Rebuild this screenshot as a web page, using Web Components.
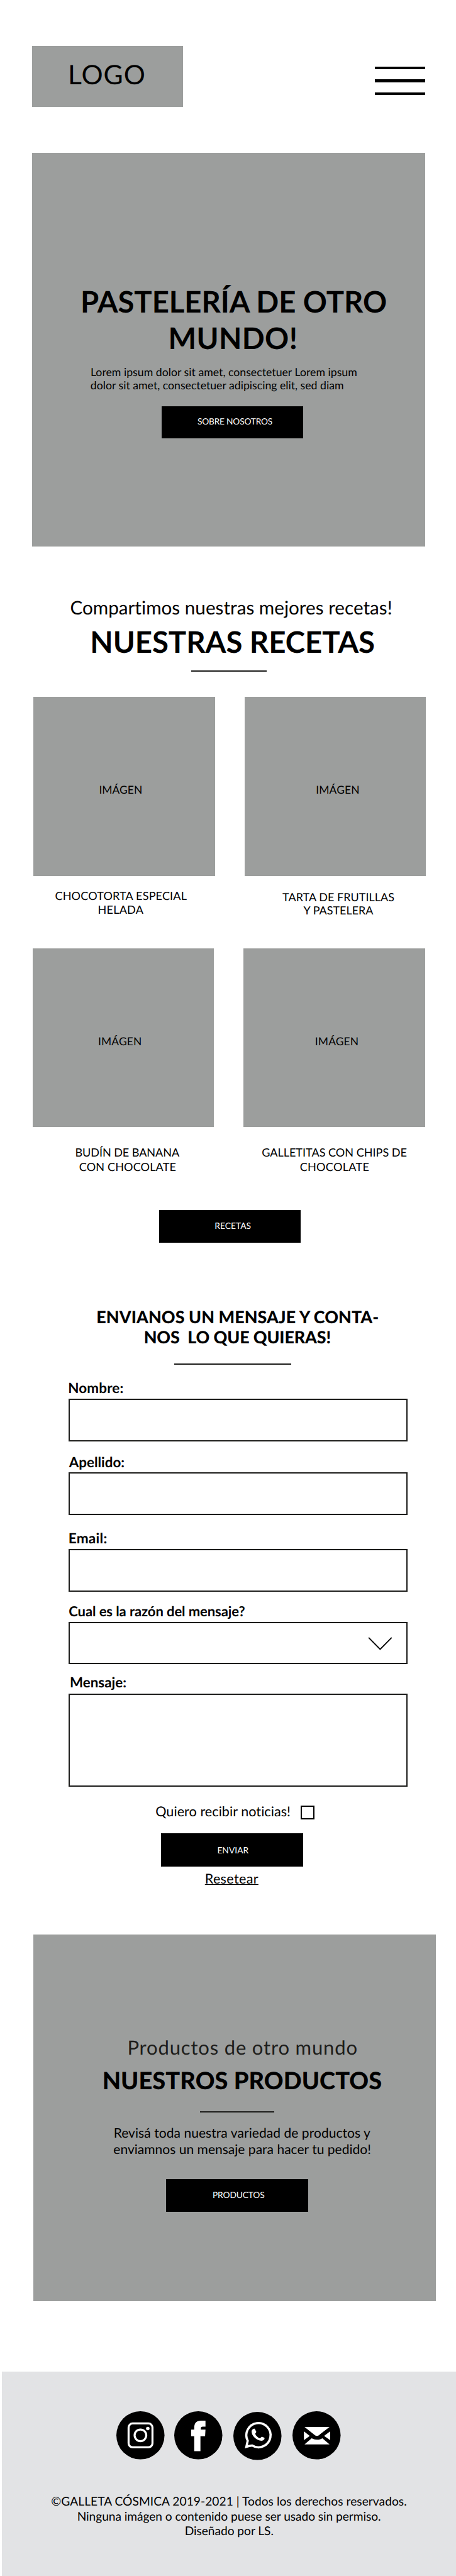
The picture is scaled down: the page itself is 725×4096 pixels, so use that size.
<!DOCTYPE html>
<html lang="es">
<head>
<meta charset="utf-8">
<title>Galleta Cósmica</title>
<style>
  html { background: #fff; }
  body { margin: 0; height: 4096px; overflow: hidden; font-family: Lato, sans-serif; color: #000;
         text-rendering: geometricPrecision; }
</style>
</head>
<body>
<galleta-page></galleta-page>

<script>
const ZOOM = .9268;
const define = (name, html, setup) => customElements.define(name, class extends HTMLElement {
  constructor() {
    super();
    this.attachShadow({ mode: 'open' }).innerHTML = html;
  }
  connectedCallback() { if (setup) setup(this); }
});

/* One line of text: its box ends on the baseline, and tracking fits it to the ink extent a..b.
   g is the distance from the previous block's bottom edge to the baseline. */
const ctx = document.createElement('canvas').getContext('2d');
define('text-line', `<style>
    :host { display: block; width: max-content; flex: none; }
    span { display: block; width: max-content; white-space: pre; }
  </style><span><slot></slot></span>`, el => {
  const n = k => parseFloat(el.getAttribute(k));
  const size = n('s'), weight = el.getAttribute('w') || 400, text = el.textContent;
  ctx.font = `${weight} 200px Lato`;
  const m = ctx.measureText(text), k = size / 200;
  const left = -m.actualBoundingBoxLeft * k;
  const right = (m.width - m.actualBoundingBoxRight) * k;
  const ascent = Math.round(m.fontBoundingBoxAscent * k * ZOOM) / ZOOM;
  const descent = Math.round(m.fontBoundingBoxDescent * k * ZOOM) / ZOOM;
  const st = el.style;
  st.fontSize = size + 'px';
  st.fontWeight = weight;
  st.height = size + 'px';
  st.lineHeight = 2 * size - (ascent - descent) + 'px';
  st.marginLeft = n('a') - left + 'px';
  st.marginTop = n('g') - size + 'px';
  /* Track from the advance width that the laid-out line really has. */
  const span = el.shadowRoot.querySelector('span');
  const wanted = n('b') - n('a') + left + right;
  st.letterSpacing = '0.001px';
  const scale = span.getBoundingClientRect().height / parseFloat(st.lineHeight) > .96 ? 1 : ZOOM;
  const natural = span.getBoundingClientRect().width / scale;
  if (natural > 0) st.letterSpacing = ((wanted - natural) / (text.length - 1)).toFixed(4) + 'px';
});

define('solid-button', `
  <style>
    :host { display: flow-root; box-sizing: border-box; width: var(--w, 244px); height: var(--h, 56px);
            background: #000; color: #fff; }
  </style><slot></slot>`);

define('thin-rule', `
  <style>:host { display: block; height: 2.16px; background: #1d1d1b; }</style>`);

define('menu-bars', `
  <style>
    :host { display: flex; flex-direction: column; gap: 17.2px; width: 86.6px; margin-top: 35.3px; }
    i { height: 4.8px; background: #000; }
  </style><i></i><i></i><i></i>`);

define('site-header', `
  <style>
    :host { display: flex; justify-content: space-between; align-items: flex-start;
            margin: 0 53px 0 55px; padding-top: 79px; height: 104px; }
    .logo { display: flow-root; width: 259px; height: 104px; background: #9c9e9d; }
  </style>
  <div class="logo"><text-line s="46" a="65.7" b="191.9" g="67.7">LOGO</text-line></div>
  <menu-bars></menu-bars>`);

define('hero-banner', `
  <style>
    :host { display: flow-root; margin: 79.6px 0 0 55px; width: 674px; height: 675.4px; background: #9c9e9d; }
    solid-button { margin: 28px 0 0 222.3px; --w: 242.9px; --h: 55.7px; }
  </style>
  <text-line s="51" w="700" a="87.1" b="606.8" g="275.4">PASTELERÍA DE OTRO</text-line>
  <text-line s="51" w="700" a="237.8" b="452.2" g="62">MUNDO!</text-line>
  <text-line s="19.1" a="102" b="556.5" g="46">Lorem ipsum dolor sit amet, consectetuer Lorem ipsum</text-line>
  <text-line s="19.1" a="101" b="533.5" g="23">dolor sit amet, consectetuer adipiscing elit, sed diam</text-line>
  <solid-button><text-line s="14.8" a="61.9" b="189.5" g="32">SOBRE NOSOTROS</text-line></solid-button>`);

define('recipe-card', `
  <style>
    :host { display: flow-root; }
    .image { display: flow-root; height: 306.6px; background: #9c9e9d; }
  </style>
  <div class="image"><slot name="image"></slot></div>
  <slot></slot>`);

define('recipe-section', `
  <style>
    :host { display: flow-root; }
    thin-rule { margin: 28.3px 0 -.16px 327.7px; width: 129.7px; }
    .row { display: grid; grid-template-columns: 311.5px 311.5px; column-gap: 50.6px; }
    .one { margin: 44px 0 0 57.4px; height: 431px; }
    .two { margin-left: 55.9px; height: 449px; }
    solid-button { margin-left: 272.8px; --w: 243.4px; --h: 55.7px; }
  </style>
  <text-line s="32" a="121.7" b="670.8" g="118">Compartimos nuestras mejores recetas!</text-line>
  <text-line s="51.1" w="700" a="158.6" b="641.4" g="65.7">NUESTRAS RECETAS</text-line>
  <thin-rule></thin-rule>
  <div class="row one">
    <recipe-card>
      <text-line slot="image" s="18.8" a="114.2" b="185" g="166">IMÁGEN</text-line>
      <text-line s="19.5" a="37.9" b="262.8" g="41.3">CHOCOTORTA ESPECIAL</text-line>
      <text-line s="19.5" a="112.2" b="188.5" g="24">HELADA</text-line>
    </recipe-card>
    <recipe-card>
      <text-line slot="image" s="18.8" a="124.1" b="195.5" g="166">IMÁGEN</text-line>
      <text-line s="19.4" a="65.3" b="256.3" g="44.3">TARTA DE FRUTILLAS</text-line>
      <text-line s="19.4" a="101.2" b="220.9" g="23">Y PASTELERA</text-line>
    </recipe-card>
  </div>
  <div class="row two">
    <recipe-card>
      <text-line slot="image" s="18.8" a="114.1" b="185.5" g="166.3">IMÁGEN</text-line>
      <text-line s="19.5" a="74.8" b="251.8" g="51.2">BUDÍN DE BANANA</text-line>
      <text-line s="19.5" a="80.8" b="245.3" g="24.3">CON CHOCOLATE</text-line>
    </recipe-card>
    <recipe-card>
      <text-line slot="image" s="18.8" a="124.1" b="195.5" g="166.3">IMÁGEN</text-line>
      <text-line s="19.5" a="31.9" b="279.3" g="51.2">GALLETITAS CON CHIPS DE</text-line>
      <text-line s="19.5" a="97.2" b="214.4" g="24.3">CHOCOLATE</text-line>
    </recipe-card>
  </div>
  <solid-button><text-line s="14.9" a="96.8" b="157.2" g="33">RECETAS</text-line></solid-button>`);

define('form-field', `
  <style>
    :host { display: block; }
    .box { box-sizing: border-box; margin: var(--gap, 9px) 0 0 var(--x, 117.2px); width: 581.8px; height: var(--h, 73px);
           border: 2.2px solid #1d1d1b; }
  </style>
  <slot name="label"></slot><div class="box"><slot></slot></div>`);

define('drop-arrow', `
  <style>
    :host { display: block; width: 44px; height: 26px; margin: 22px 0 0 511.3px; }
    svg { display: block; }
  </style>
  <svg width="44" height="26" viewBox="0 0 44 26" fill="none" stroke="#000" stroke-width="2"><path d="M2.3 3 22 23.2 41.8 3"/></svg>`);

define('contact-form', `
  <style>
    :host { display: flow-root; }
    thin-rule { margin: 34px 0 -.16px 298.8px; width: 200.5px; }
    .news { display: flex; height: 24px; margin-top: 32.3px; }
    .check { box-sizing: border-box; width: 24px; height: 24px; border: 2.2px solid #000; margin-left: auto; margin-right: 243px; }
    solid-button { margin: 24px 0 0 275.8px; --w: 244.4px; --h: 56.7px; }
    .reset { text-decoration: underline; text-decoration-skip-ink: none; text-decoration-thickness: 1.4px; text-underline-offset: 1.5px; }
  </style>
  <text-line s="29" w="900" a="167.6" b="648.4" g="138.3">ENVIANOS UN MENSAJE Y CONTA-</text-line>
  <text-line s="29" w="900" a="248.9" b="566" g="35">NOS  LO QUE QUIERAS!</text-line>
  <thin-rule></thin-rule>
  <form-field><text-line slot="label" s="24.2" w="700" a="118.7" b="210.5" g="50">Nombre:</text-line></form-field>
  <form-field style="--gap:8.5px"><text-line slot="label" s="24.2" w="700" a="118.2" b="212.5" g="45">Apellido:</text-line></form-field>
  <form-field style="--h:72.8px"><text-line slot="label" s="24.4" w="700" a="119.2" b="182.5" g="49.5">Email:</text-line></form-field>
  <form-field style="--gap:9.8px;--h:72.8px"><text-line slot="label" s="23.8" w="700" a="118.7" b="419.5" g="42.2">Cual es la razón del mensaje?</text-line><drop-arrow></drop-arrow></form-field>
  <form-field style="--gap:9.6px;--h:160.1px;--x:117.8px"><text-line slot="label" s="24.1" w="700" a="121.7" b="215.5" g="40.4">Mensaje:</text-line></form-field>
  <div class="news"><text-line s="23.3" a="267.8" b="496.8" g="19">Quiero recibir noticias!</text-line><div class="check"></div></div>
  <solid-button><text-line s="14.9" a="98.2" b="150.6" g="35">ENVIAR</text-line></solid-button>
  <text-line class="reset" s="23.3" a="353.6" b="442.9" g="30">Resetear</text-line>`);

define('product-banner', `
  <style>
    :host { display: flow-root; margin: 86.7px 0 0 57.4px; width: 690.2px; height: 629px; background: #9c9e9d; }
    .lead { color: #1d1d1b; }
    thin-rule { margin: 36.3px 0 -.16px 285.6px; width: 127.8px; }
    solid-button { margin: 42.1px 0 0 227.4px; --w: 244.4px; --h: 55.8px; }
  </style>
  <text-line class="lead" s="33.5" a="164" b="554.1" g="206.4">Productos de otro mundo</text-line>
  <text-line s="41" w="900" a="121.2" b="596.5" g="59.9">NUESTROS PRODUCTOS</text-line>
  <thin-rule></thin-rule>
  <text-line s="22.7" a="139.6" b="578" g="44.9">Revisá toda nuestra variedad de productos y</text-line>
  <text-line s="22.7" a="138.1" b="577.6" g="28">enviamnos un mensaje para hacer tu pedido!</text-line>
  <solid-button><text-line s="14.9" a="81.2" b="168.6" g="33">PRODUCTOS</text-line></solid-button>`);

const glyphs = {
  instagram: '<g fill="none" stroke="#fff" stroke-width="10.5"><rect x="63" y="63" width="123" height="123" rx="21"/><circle cx="124" cy="124" r="30"/></g><circle cx="162" cy="89" r="9" fill="#fff"/>',
  facebook: '<path fill="#fff" d="M103 206V129H87V95H103V85Q103 49 139 49H161V79H147Q137 79 137 88V95H161L159 129H135V206Z"/>',
  whatsapp: '<path fill="none" stroke="#fff" stroke-width="11.5" d="M67 180 74 149A62.500 62.500 0 1 1 97 173.500Q82 175 67 180Z"/><path fill="#fff" d="M94 100C95 91 105 84 110 87L118 102C119 107 112 110 113 114C117 124 126 132 136 136C141 136 143 128 148 128L160 134C163 141 155 149 145 149C120 148 93 124 94 100Z"/>',
  mail: '<path fill="#fff" d="M62 81H191L138 122Q126 132 114 122ZM59 104V149L89 127ZM194 104V149L163 127ZM62 171 99 139Q126 155 154 139L191 171Z"/>'
};
define('social-icon', `
  <style>:host, svg { display: block; width: 82.6px; height: 82.6px; }</style>
  <svg viewBox="0 0 248 248"></svg>`, el => {
  el.shadowRoot.querySelector('svg').innerHTML = '<circle cx="124" cy="124" r="124"/>' + glyphs[el.getAttribute('name')];
});

define('site-footer', `
  <style>
    :host { display: flow-root; margin: 120.6px 0 0 3.5px; height: 355px; background: #e2e3e5; }
    .social { display: flex; margin: 68.3px 0 0 196.6px; height: 82.5px; }
  </style>
  <div class="social">
    <social-icon name="instagram"></social-icon>
    <social-icon name="facebook" style="margin-left:16.2px"></social-icon>
    <social-icon name="whatsapp" style="margin:1px 0 0 19px"></social-icon>
    <social-icon name="mail" style="margin-left:19.2px"></social-icon>
  </div>
  <text-line s="20.7" a="85.3" b="693.3" g="80.2">©GALLETA CÓSMICA 2019-2021 | Todos los derechos reservados.</text-line>
  <text-line s="20.7" a="130.7" b="648.9" g="26">Ninguna imágen o contenido puese ser usado sin permiso.</text-line>
  <text-line s="20.7" a="315.2" b="464.8" g="25">Diseñado por LS.</text-line>`);

define('galleta-page', `
  <style>:host { display: flow-root; zoom: ${ZOOM}; }</style>
  <site-header></site-header>
  <hero-banner></hero-banner>
  <recipe-section></recipe-section>
  <contact-form></contact-form>
  <product-banner></product-banner>
  <site-footer></site-footer>`);
</script>
</body>
</html>
